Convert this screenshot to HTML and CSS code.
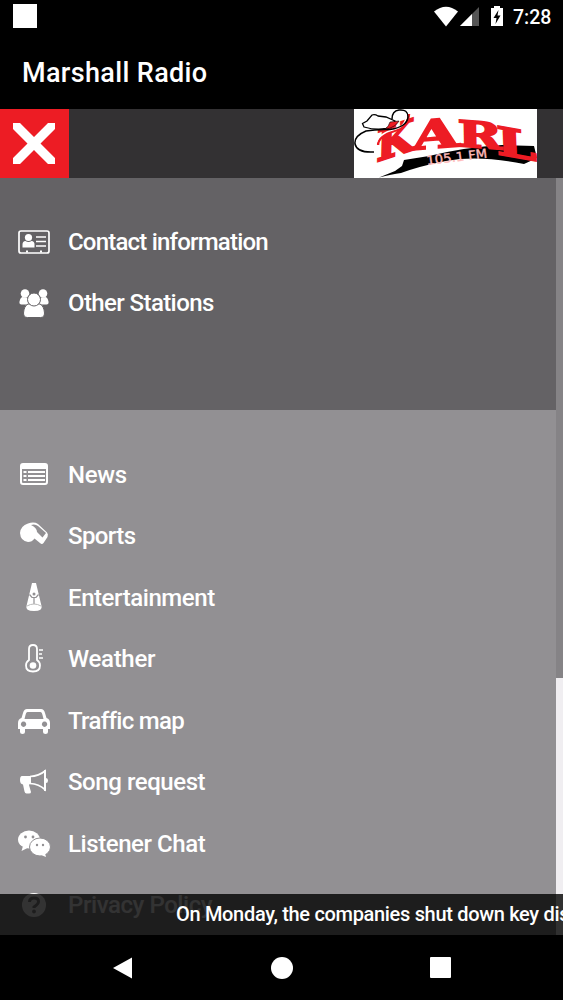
FILE: index.html
```html
<!DOCTYPE html>
<html lang="en">
<head>
    <meta charset="UTF-8">
    <meta name="viewport" content="width=device-width, initial-scale=1.0">
    <title>Marshall Radio</title>
    <link rel="stylesheet" href="styles.css">
</head>
<body>
    <div class="status-bar">
        <div class="notification"></div>
        <svg class="status-icons" width="70" height="24" viewBox="0 0 70 24" fill="#fff">
            <path d="M1 6.500Q13 -3 25 6.500L13 21.500Z"/>
            <path d="M46 2V21H27Z" fill="#555"/>
            <path d="M39 9V21H27Z"/>
            <path d="M58 3h3V1h6v2h3v18H58Z"/>
            <path d="M65.500 5L60.500 13h3l-1 6 5-8.500h-3Z" fill="#000"/>
        </svg>
        <span class="clock">7:28</span>
    </div>
    <div class="title-bar">Marshall Radio</div>

    <header class="header">
        <button class="close">
            <svg width="42" height="42" viewBox="0 0 42 42"><path d="M0 0H7L21 14 35 0H42V6L27.500 20.500 42 35V41H35L21 27 7 41H0V35L14.500 20.500 0 6Z" fill="#fff"/></svg>
        </button>
        <svg class="logo" width="183" height="69" viewBox="0 0 183 69">
            <rect width="183" height="69" fill="#fff"/>
            <path d="M25 68.500L41 62l7-5 2-6 25-4Q112 38 148 36l32 1 3 12-13 6Q125 46 92 52 66 57 47 64 38 65 25 68.500Z" fill="#000"/>
            <g class="logo-name">
                <text transform="matrix(.92 -.3 -.03 1.100 22 53)" font-size="40" textLength="41" lengthAdjust="spacingAndGlyphs">K</text>
                <text transform="matrix(1 -.08 0 1 58 41)" font-size="40" textLength="47" lengthAdjust="spacingAndGlyphs">A</text>
                <text transform="matrix(1 .08 .02 1 104 37)" font-size="36" textLength="44" lengthAdjust="spacingAndGlyphs">R</text>
                <text transform="matrix(1 .18 .04 1 143 45)" font-size="39" textLength="40" lengthAdjust="spacingAndGlyphs">L</text>
            </g>
            <path d="M55 5Q54 18 40 22Q24 27 24 36" fill="none" stroke="#ed1c24" stroke-width="2.500"/>
            <path d="M53 4Q52 18 40 20.500Q23 25 22 36" fill="none" stroke="#fff" stroke-width="1.500"/>
            <path d="M10 18L8.500 14.500 13 12 18 6Q21 5 24 7L32 8 41 12Q38 18 32 19.500Q22 21.500 10 18Z" fill="#fff" stroke="#000" stroke-width="1.300"/>
            <path d="M36 13L45 12Q42 18 31 20.500Q35 17 36 13Z" fill="#ed1c24" stroke="#000" stroke-width=".6"/>
            <path d="M38 10Q38 2 45 1Q54 0 54 8Q53 18 36 20.500Q22 20 12 22Q0 27 1 35Q3 44 20 43" fill="none" stroke="#000" stroke-width="1.500"/>
            <text class="logo-freq" transform="rotate(-7 73 56)" x="73" y="56" textLength="61" lengthAdjust="spacingAndGlyphs">105.1 FM</text>
        </svg>
    </header>

    <main class="content">
        <nav class="menu">
            <div class="menu-top">
                <a class="item">
                    <svg class="icon" viewBox="0 0 34 34" fill="#fff">
                        <rect x="2" y="6" width="30" height="22" rx="2" fill="none" stroke="#fff" stroke-width="1.700"/>
                        <circle cx="11.500" cy="12.500" r="3.600"/>
                        <path d="M5.500 22.500v-3q0-3.500 3-3.500 3 2 6 0 3 0 3 3.500v3Z"/>
                        <path d="M19 12h10M19 16.500h10M19 21h10" stroke="#fff" stroke-width="1.700"/>
                        <path d="M10 25.500v2M24 25.500v2" stroke="#fff" stroke-width="2"/>
                    </svg>
                    <span class="contact">Contact information</span>
                </a>
                <a class="item">
                    <svg class="icon" viewBox="0 0 34 34" fill="#fff">
                        <circle cx="8" cy="7.500" r="4.300"/>
                        <circle cx="26" cy="7.500" r="4.300"/>
                        <path d="M5 11q-2 1-2.500 4.500-.5 3 2 3h8V12ZM29 11q2 1 2.500 4.500.5 3-2 3h-8V12Z"/>
                        <g stroke="#646265" stroke-width="1">
                            <path d="M11 18h12q4 2 4.500 9 0 4.500-4 4.500h-13q-4 0-4-4.500 .5-7 4.500-9Z"/>
                            <circle cx="17" cy="13.500" r="6.500"/>
                        </g>
                    </svg>
                    <span class="stations">Other Stations</span>
                </a>
            </div>
            <div class="menu-main">
                <a class="item">
                    <svg class="icon" viewBox="0 0 34 34" fill="#fff">
                        <path fill-rule="evenodd" d="M6 5h22q3 0 3 3v16q0 3-3 3H6q-3 0-3-3V8q0-3 3-3ZM5 11v13q0 1 1 1h22q1 0 1-1V11Z"/>
                        <path d="M11 14h17M11 18h17M11 22h17" stroke="#fff" stroke-width="1.800"/>
                        <path d="M6.500 14h3M6.500 18h3M6.500 22h3" stroke="#fff" stroke-width="2"/>
                    </svg>
                    <span class="news">News</span>
                </a>
                <a class="item">
                    <svg class="icon" viewBox="0 0 34 34" fill="#fff">
                        <path fill-rule="evenodd" d="M11 4.500Q17 2.500 21 5L30 13.500Q31.500 15 30.500 18L26.500 24Q25 26 23 24L17.500 19.500Q15 23 11 23 3.500 22 3 14 3.500 7 11 4.500ZM14 6Q20 9 20 13L25.500 18.500 29 14 21 7Q18 4.500 14 6Z"/>
                    </svg>
                    <span class="sports">Sports</span>
                </a>
                <a class="item">
                    <svg class="icon" viewBox="0 0 34 34" fill="#fff">
                        <path d="M15 2h4L24.500 25Q26 30 17 30T9.500 25Z"/>
                        <circle cx="17" cy="13" r="1.500" fill="#929093"/>
                        <path d="M12.500 13.500l2.500 3h4l2.500-3M17 17v6" fill="none" stroke="#929093" stroke-width="1.200"/>
                        <path d="M10 25q7-4 14 0" fill="none" stroke="#bbb" stroke-width="1"/>
                    </svg>
                    <span>Entertainment</span>
                </a>
                <a class="item">
                    <svg class="icon" viewBox="0 0 34 34" fill="#fff">
                        <path d="M12 18V7q0-4 4-4t4 4v11q3 2 3 5.500 0 6-7 6t-7-6Q9 20 12 18Z" fill="none" stroke="#fff" stroke-width="1.800"/>
                        <circle cx="16" cy="23.500" r="3.300"/>
                        <path d="M22 8h4M22 12h3M22 16h4" stroke="#fff" stroke-width="1.600"/>
                    </svg>
                    <span class="weather">Weather</span>
                </a>
                <a class="item">
                    <svg class="icon" viewBox="0 0 34 34" fill="#fff">
                        <path fill-rule="evenodd" d="M10 5h14q3 0 4 4l1.500 5q3.500 1 3.500 5v6h-2v3q0 2-2.500 2T26 28v-3H8v3q0 2-2.500 2T3 28v-3H1v-6q0-4 3.500-5L6 9q1-4 4-4ZM10.500 8q-1.500 0-2 3l-1 4h19l-1-4q-.5-3-2-3ZM6.500 17.500a2.700 2.700 0 1 0 .1 0ZM27.500 17.500a2.700 2.700 0 1 0 .1 0Z"/>
                    </svg>
                    <span class="traffic">Traffic map</span>
                </a>
                <a class="item">
                    <svg class="icon" viewBox="0 0 34 34" fill="#fff">
                        <path d="M14 11v8q-2 0-2 1l2 7q0 1.500-2 1.500H9.500q-1.500 0-2-2L6 19.500Q3 19 3 15t2-4Z"/>
                        <path d="M13 11.500Q22 11 28 6v18.500Q22 19 13 18.500" fill="none" stroke="#fff" stroke-width="1.700"/>
                        <path d="M27 5h2v21h-2ZM29 13q2 0 2 2.500T29 18Z"/>
                    </svg>
                    <span>Song request</span>
                </a>
                <a class="item">
                    <svg class="icon" viewBox="0 0 34 34" fill="#fff">
                        <ellipse cx="12" cy="12.500" rx="11" ry="9"/>
                        <path d="M6 19l-1.500 5 6-3Z"/>
                        <ellipse cx="23" cy="20" rx="10.500" ry="9" stroke="#929093" stroke-width="1"/>
                        <path d="M24 28l5 2-1-4Z"/>
                        <g fill="#929093">
                            <circle cx="8.500" cy="10" r="1.400"/><circle cx="16" cy="10" r="1.400"/>
                            <circle cx="20" cy="18" r="1.200"/><circle cx="26" cy="18" r="1.200"/>
                        </g>
                    </svg>
                    <span>Listener Chat</span>
                </a>
                <a class="item">
                    <svg class="icon" viewBox="0 0 34 34" fill="#fff">
                        <circle cx="17" cy="17" r="12"/>
                        <path d="M12.500 14q0-4 4.500-4t4.500 3.500Q21.500 16 17 19v1" fill="none" stroke="#929093" stroke-width="3"/>
                        <circle cx="17" cy="23.500" r="1.900" fill="#929093"/>
                    </svg>
                    <span>Privacy Policy</span>
                </a>
            </div>
        </nav>
        <div class="page-edge"></div>
        <div class="ticker">On Monday, the companies shut down key dis</div>
    </main>

    <footer class="nav-bar">
        <svg width="22" height="24" viewBox="0 0 22 24"><path d="M1 12L20 1.500V22.500Z" fill="#fff"/></svg>
        <div class="home"></div>
        <div class="recent"></div>
    </footer>
</body>
</html>
```
FILE: styles.css
```css
* {
    box-sizing: border-box;
}
body {
    margin: 0;
    height: 1000px;
    display: flex;
    flex-direction: column;
    overflow: hidden;
    background: #000;
    color: #fff;
    font-family: Roboto, sans-serif;
}
.status-bar {
    height: 34px;
    display: flex;
    align-items: center;
    padding: 0 12px 0 13px;
}
.notification {
    width: 24px;
    height: 24px;
    margin: -2px auto 0 0;
    background: #fff;
}
.status-icons {
    margin-right: 10px;
}
.clock {
    width: 38px;
    font-size: 19.500px;
    font-weight: 500;
    white-space: nowrap;
}
.title-bar {
    height: 75px;
    padding-left: 22px;
    line-height: 78px;
    font-size: 27px;
    font-weight: 500;
    letter-spacing: 0.350px;
}
.header {
    height: 69px;
    display: flex;
    justify-content: space-between;
    padding-right: 26px;
    background: #333133;
}
.close {
    width: 69px;
    height: 69px;
    display: flex;
    align-items: center;
    justify-content: center;
    padding: 0 1px 0 0;
    border: none;
    background: #ed1c24;
}
.logo-name {
    font-family: "DejaVu Serif", serif;
    font-weight: bold;
    fill: #ed1c24;
    stroke: #ed1c24;
    stroke-width: 1.800px;
}
.logo-freq {
    font-family: "DejaVu Sans", sans-serif;
    font-size: 12.500px;
    fill: #fbb;
    stroke: #fbb;
    stroke-width: 0.400px;
}
.content {
    position: relative;
    height: 757px;
    display: flex;
    overflow: hidden;
}
.menu {
    flex: 1;
}
.menu-top {
    height: 232px;
    padding-top: 33px;
    background: #646265;
}
.menu-main {
    height: 525px;
    padding-top: 34px;
    background: #929093;
}
.item {
    height: 61.500px;
    display: flex;
    align-items: center;
    padding-left: 17px;
    font-size: 24px;
    font-weight: 500;
    letter-spacing: -0.430px;
    white-space: nowrap;
}
.icon {
    width: 34px;
    height: 34px;
    margin-right: 17px;
}
.contact {
    letter-spacing: -0.800px;
}
.stations {
    letter-spacing: -0.600px;
}
.news,
.weather {
    letter-spacing: -0.300px;
}
.sports {
    letter-spacing: -0.600px;
}
.traffic {
    letter-spacing: -0.700px;
}
.page-edge {
    width: 7px;
    background: linear-gradient(#858386 500px, #f0eef1 500px);
}
.ticker {
    position: absolute;
    left: 0;
    right: 0;
    bottom: 0;
    height: 41px;
    padding-left: 176px;
    line-height: 40px;
    overflow: hidden;
    background: rgba(0, 0, 0, 0.8);
    font-size: 20px;
    font-weight: 500;
    letter-spacing: -0.320px;
    white-space: nowrap;
}
.nav-bar {
    height: 65px;
    display: flex;
    align-items: center;
    justify-content: space-between;
    padding: 0 112px;
}
.home {
    width: 22px;
    height: 22px;
    border-radius: 50%;
    background: #fff;
}
.recent {
    width: 21px;
    height: 21px;
    border-radius: 1px;
    background: #fff;
}
```
